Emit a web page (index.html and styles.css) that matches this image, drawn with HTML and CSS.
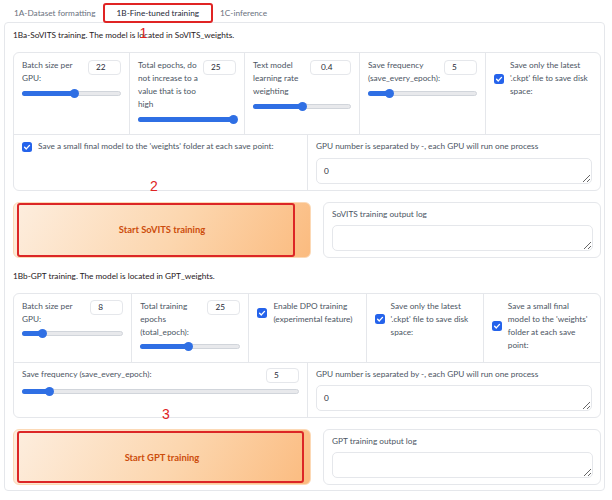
FILE: index.html
```html
<!DOCTYPE html>
<html>
<head>
<meta charset="utf-8">
<link rel="stylesheet" href="styles.css">
</head>
<body>
<div class="page">
  <div class="tabs">
    <div class="tab">1A-Dataset formatting</div>
    <div class="tab active">1B-Fine-tuned training<span class="mark m1">1</span></div>
    <div class="tab">1C-inference</div>
  </div>
  <div class="panel">
    <div class="title">1Ba-SoVITS training. The model is located in SoVITS_weights.</div>
    <div class="block">
      <div class="row five">
        <div class="cell">
          <div class="head"><span class="lbl">Batch size per GPU:</span><span class="num">22</span></div>
          <div class="slider"><div class="track"><div class="fill" style="width:54%"></div></div></div>
        </div>
        <div class="cell">
          <div class="head"><span class="lbl">Total epochs, do not increase to a value that is too high</span><span class="num">25</span></div>
          <div class="slider"><div class="track"><div class="fill" style="width:100%"></div></div></div>
        </div>
        <div class="cell">
          <div class="head"><span class="lbl">Text model learning rate weighting</span><span class="num wide">0.4</span></div>
          <div class="slider"><div class="track"><div class="fill" style="width:52%"></div></div></div>
        </div>
        <div class="cell">
          <div class="head"><span class="lbl">Save frequency (save_every_epoch):</span><span class="num">5</span></div>
          <div class="slider"><div class="track"><div class="fill" style="width:20%"></div></div></div>
        </div>
        <div class="cell">
          <div class="check"><span class="cb"><svg viewBox="0 0 10 10"><path d="M2.6 5.2 L4.3 6.9 L7.5 3.4"/></svg></span><span class="lbl">Save only the latest '.ckpt' file to save disk space:</span></div>
        </div>
      </div>
      <div class="row two">
        <div class="cell">
          <div class="check"><span class="cb"><svg viewBox="0 0 10 10"><path d="M2.6 5.2 L4.3 6.9 L7.5 3.4"/></svg></span><span class="lbl">Save a small final model to the 'weights' folder at each save point:</span></div>
        </div>
        <div class="cell">
          <div class="lbl">GPU number is separated by -, each GPU will run one process</div>
          <textarea class="ta" readonly>0</textarea>
        </div>
      </div>
      <span class="mark m2">2</span>
    </div>
    <div class="actions">
      <div class="btn">Start SoVITS training<span class="redbox rb1"></span></div>
      <div class="log">
        <div class="lbl">SoVITS training output log</div>
        <textarea class="ta" readonly></textarea>
      </div>
    </div>

    <div class="title second">1Bb-GPT training. The model is located in GPT_weights.</div>
    <div class="block">
      <div class="row five">
        <div class="cell">
          <div class="head"><span class="lbl">Batch size per GPU:</span><span class="num">8</span></div>
          <div class="slider"><div class="track"><div class="fill" style="width:21%"></div></div></div>
        </div>
        <div class="cell">
          <div class="head"><span class="lbl">Total training epochs (total_epoch):</span><span class="num">25</span></div>
          <div class="slider"><div class="track"><div class="fill" style="width:49%"></div></div></div>
        </div>
        <div class="cell">
          <div class="check"><span class="cb"><svg viewBox="0 0 10 10"><path d="M2.6 5.2 L4.3 6.9 L7.5 3.4"/></svg></span><span class="lbl">Enable DPO training (experimental feature)</span></div>
        </div>
        <div class="cell">
          <div class="check"><span class="cb"><svg viewBox="0 0 10 10"><path d="M2.6 5.2 L4.3 6.9 L7.5 3.4"/></svg></span><span class="lbl">Save only the latest '.ckpt' file to save disk space:</span></div>
        </div>
        <div class="cell">
          <div class="check"><span class="cb"><svg viewBox="0 0 10 10"><path d="M2.6 5.2 L4.3 6.9 L7.5 3.4"/></svg></span><span class="lbl">Save a small final model to the 'weights' folder at each save point:</span></div>
        </div>
      </div>
      <div class="row two">
        <div class="cell">
          <div class="head"><span class="lbl">Save frequency (save_every_epoch):</span><span class="num">5</span></div>
          <div class="slider"><div class="track"><div class="fill" style="width:10%"></div></div></div>
        </div>
        <div class="cell">
          <div class="lbl">GPU number is separated by -, each GPU will run one process</div>
          <textarea class="ta" readonly>0</textarea>
        </div>
      </div>
      <span class="mark m3">3</span>
    </div>
    <div class="actions">
      <div class="btn">Start GPT training<span class="redbox rb2"></span></div>
      <div class="log">
        <div class="lbl">GPT training output log</div>
        <textarea class="ta" readonly></textarea>
      </div>
    </div>
  </div>
</div>
</body>
</html>
```
FILE: styles.css
```css
* { box-sizing: border-box; }
body {
  margin: 0;
  background: #fff;
  font-family: Lato, "Noto Sans", sans-serif;
  font-size: 8.25px;
  color: #4b5563;
}
.page { position: relative; width: 612px; }

.tabs {
  display: flex;
  align-items: flex-start;
  height: 22px;
  padding-left: 7px;
}
.tab {
  height: 20px;
  margin-top: 3px;
  padding: 0 7px;
  line-height: 20px;
  color: #6b7280;
  white-space: nowrap;
}
.tab.active {
  position: relative;
  z-index: 1;
  background: #fff;
  border: 2px solid #e02424;
  border-radius: 3px;
  line-height: 16px;
  padding: 0 12px;
  color: #1f2937;
}

.mark {
  position: absolute;
  font-family: "Liberation Sans", Arial, sans-serif;
  font-size: 14px;
  line-height: 14px;
  color: #e02424;
}
.m1 { left: 35px; top: 21px; }
.m2 { left: 136px; top: 126px; }
.m3 { left: 148px; top: 113px; }

.panel {
  margin-left: 4px;
  width: 601px;
  border: 1px solid #e5e7eb;
  border-radius: 4px;
  padding: 6px 3px 5px 8px;
}
.title {
  line-height: 13px;
  color: #1f2023;
  margin-bottom: 10px;
}
.title.second { margin-top: 12px; }

.block {
  position: relative;
  border: 1px solid #e5e7eb;
  border-radius: 6px;
}
.row { display: grid; }
.row.five { grid-template-columns: repeat(5, 1fr); }
.row.two { grid-template-columns: 1fr 1fr; border-top: 1px solid #e5e7eb; }
.cell + .cell { border-left: 1px solid #e5e7eb; }
.row.five .cell { padding: 6px 8px 8px; }
.row.two .cell { padding: 5px 8px 6px; }

.lbl { line-height: 13px; }
.head {
  display: flex;
  align-items: flex-start;
  gap: 4px;
}
.head .lbl { flex: 1; }
.num {
  flex: none;
  width: 33px;
  height: 15px;
  margin-top: 0.5px;
  border: 1px solid #e5e7eb;
  border-radius: 4px;
  padding-left: 7px;
  line-height: 13px;
  color: #1f2937;
}
.num.wide { width: 41px; padding-left: 10px; }

.slider {
  display: flex;
  align-items: center;
  height: 14px;
  margin-top: 1px;
}
.track {
  position: relative;
  flex: 1;
  height: 5px;
  background: #e8e9ec;
  border: 1px solid #d1d5db;
  border-radius: 3px;
}
.fill {
  position: relative;
  height: 5px;
  margin: -1px 0 0 -1px;
  background: #2f6fe4;
  border-radius: 3px;
}
.fill::after {
  content: "";
  position: absolute;
  right: -4.5px;
  top: 50%;
  width: 9px;
  height: 9px;
  margin-top: -4.5px;
  border-radius: 50%;
  background: #2f6fe4;
}

.check {
  display: flex;
  align-items: center;
  gap: 6px;
}
.cb {
  flex: none;
  width: 10px;
  height: 10px;
  border-radius: 2.5px;
  background: #2563eb;
  display: flex;
}
.cb svg { width: 10px; height: 10px; }
.cb path { fill: none; stroke: #fff; stroke-width: 1.4; stroke-linecap: round; stroke-linejoin: round; }

.ta {
  display: block;
  width: 100%;
  height: 26px;
  margin-top: 4.5px;
  border: 1px solid #e5e7eb;
  border-radius: 5px;
  padding: 6px 7px;
  font-family: inherit;
  font-size: 8.25px;
  line-height: 12px;
  color: #1f2937;
  background: #fff;
  resize: vertical;
  overflow: hidden;
}

.actions {
  display: flex;
  align-items: center;
  gap: 12px;
  margin-top: 11px;
}
.btn {
  position: relative;
  flex: 0 0 298px;
  height: 56px;
  display: flex;
  align-items: center;
  justify-content: center;
  border: 1px solid #fcd9b6;
  border-radius: 6px;
  background: linear-gradient(120deg, #fdeedf 0%, #fcd6ae 55%, #fbbb7f 100%);
  font-weight: 700;
  font-size: 9.4px;
  color: #cc4d0c;
}
.redbox {
  position: absolute;
  border: 2px solid #dc2626;
  border-radius: 3px;
}
.rb1 { top: 0; bottom: 0; left: 3px; right: 15px; }
.rb2 { top: 1px; bottom: 1px; left: 3px; right: 6px; }

.log {
  flex: 1;
  height: 56px;
  border: 1px solid #e5e7eb;
  border-radius: 6px;
  padding: 5px 7px 5px 8px;
}
.log .ta { margin-top: 4px; }
```
